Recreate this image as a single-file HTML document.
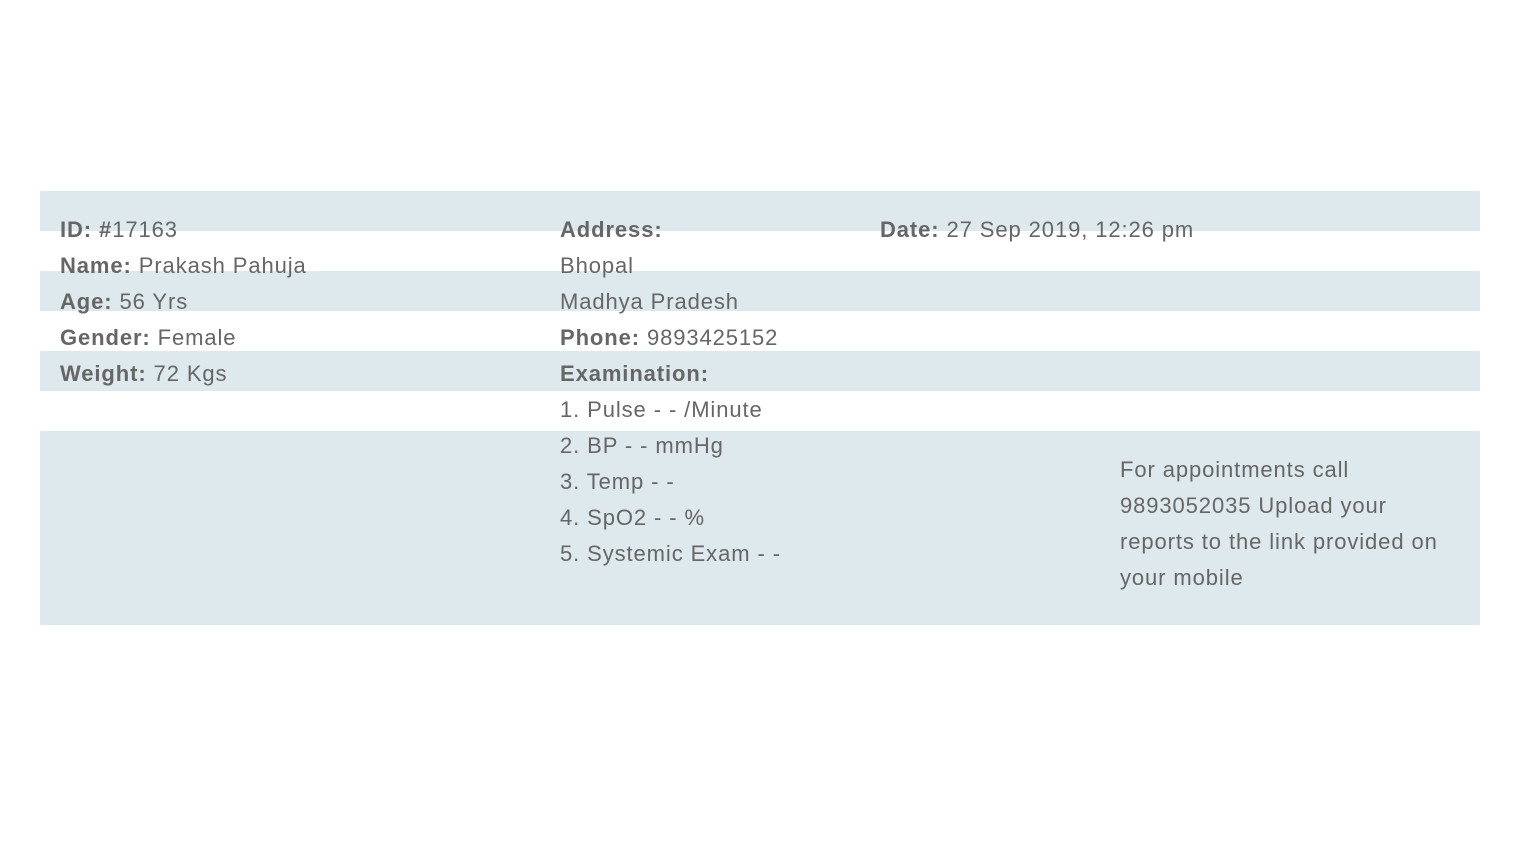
<!DOCTYPE html><html><head><style>
body{margin:0;width:1520px;height:858px;background:#fff;position:relative;font-family:"Liberation Sans",sans-serif;color:#666;font-size:22px;letter-spacing:0.9px;overflow:hidden}
.b{position:absolute;left:40px;width:1440px;background:#dde9ec}
.t{position:absolute;line-height:36px;white-space:nowrap}
b{font-weight:bold}
</style></head><body>
<div class="b" style="top:191px;height:40px"></div>
<div class="b" style="top:271px;height:40px"></div>
<div class="b" style="top:351px;height:40px"></div>
<div class="b" style="top:431px;height:194px"></div>
<div class="t" style="left:60px;top:212px"><b>ID: #</b>17163<br><b>Name:</b> Prakash Pahuja<br><b>Age:</b> 56 Yrs<br><b>Gender:</b> Female<br><b>Weight:</b> 72 Kgs</div>
<div class="t" style="left:560px;top:212px"><b>Address:</b><br>Bhopal<br>Madhya Pradesh<br><b>Phone:</b> 9893425152<br><b>Examination:</b><br>1. Pulse - - /Minute<br>2. BP - - mmHg<br>3. Temp - -<br>4. SpO2 - - %<br>5. Systemic Exam - -</div>
<div class="t" style="left:880px;top:212px"><b>Date:</b> 27 Sep 2019, 12:26 pm</div>
<div class="t" style="left:1120px;top:452px">For appointments call<br>9893052035 Upload your<br>reports to the link provided on<br>your mobile</div>
</body></html>
